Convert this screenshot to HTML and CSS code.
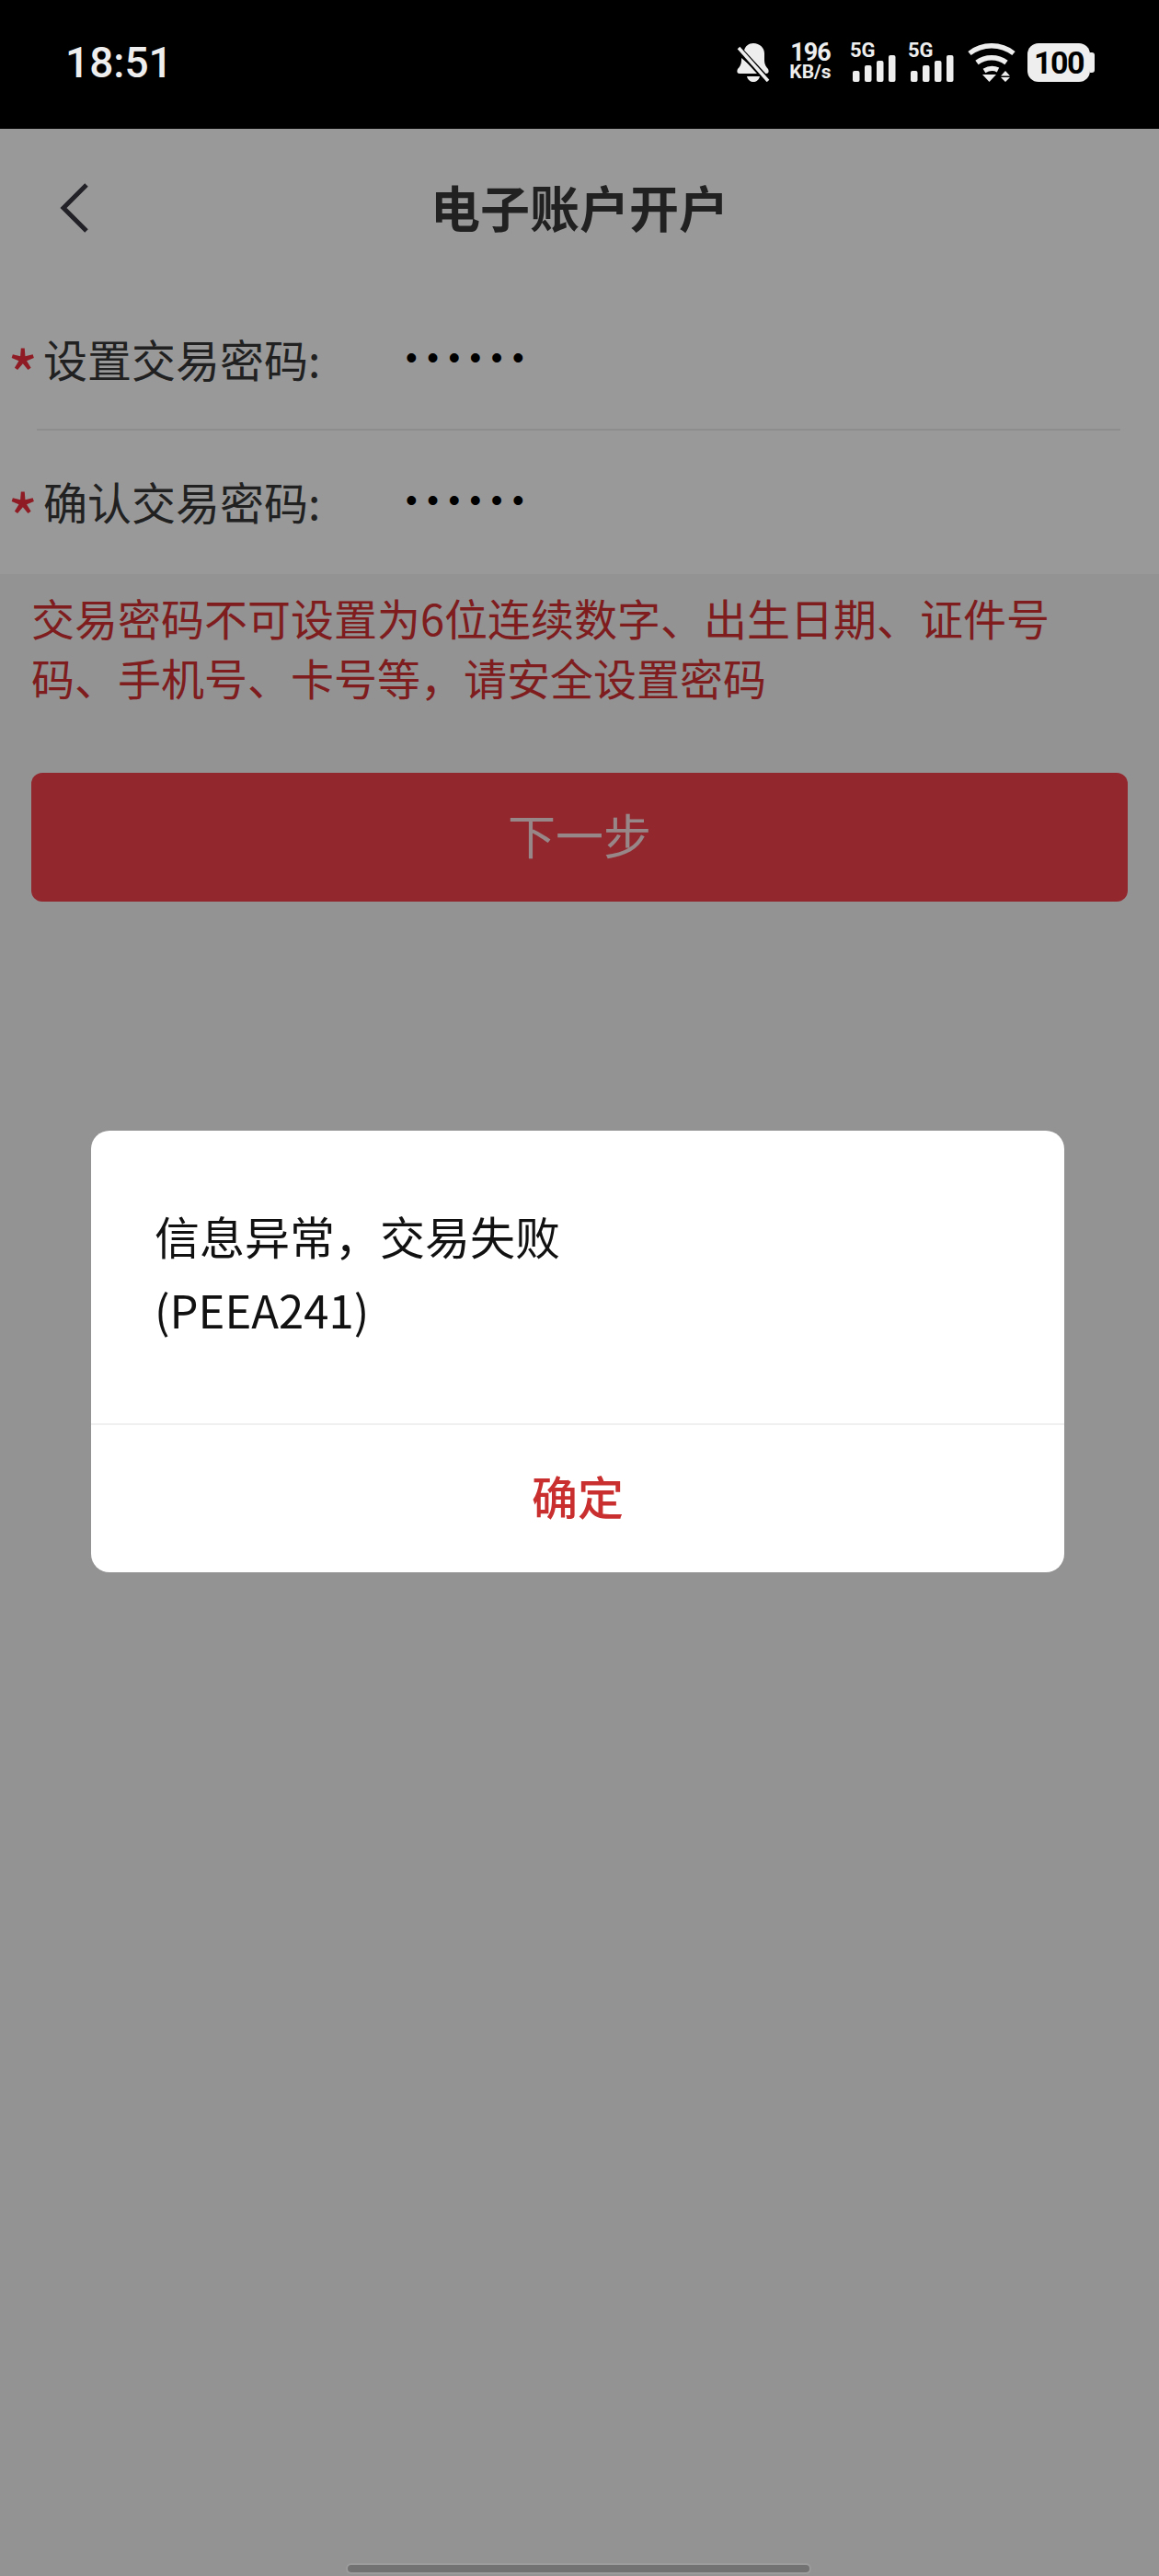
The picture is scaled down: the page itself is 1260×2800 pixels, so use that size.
FILE: index.html
```html
<!DOCTYPE html>
<html lang="zh-CN">
<head>
    <meta charset="UTF-8">
    <meta name="viewport" content="width=device-width, initial-scale=1.0">
    <title>电子账户开户</title>
    <link rel="stylesheet" href="styles.css">
</head>
<body>
    <div class="status-bar">
        <span class="status-time">18:51</span>
        <div class="status-icons">
            <svg class="icon-bell" width="36" height="42" viewBox="0 0 36 42">
                <path d="M18 0c-5 0-9 3-10 8l-1 3 21 22h4c3 0 3-3 2-5-2-2-4-5-4-9v-8c0-6-5-11-12-11z" fill="#eee"/>
                <path d="M5 16v3c0 4-2 7-4 9-1 2-1 5 2 5h22z" fill="#eee"/>
                <path d="M11 36h14c-1 4-4 6-7 6s-6-2-7-6z" fill="#eee"/>
                <path d="M1 5l33 36" stroke="#000" stroke-width="7"/>
                <path d="M2 5l32 36" stroke="#eee" stroke-width="3.6"/>
            </svg>
            <div class="net-speed">
                <span class="speed-num">196</span>
                <span class="speed-unit">KB/s</span>
            </div>
            <div class="signal">
                <span class="signal-type">5G</span>
                <svg width="47" height="29" viewBox="0 0 47 29" fill="#eee">
                    <rect x="0" y="17" width="7.5" height="12" rx="2"/>
                    <rect x="13" y="11" width="7.5" height="18" rx="2"/>
                    <rect x="26" y="6" width="7.5" height="23" rx="2"/>
                    <rect x="39" y="0" width="7.5" height="29" rx="2"/>
                </svg>
            </div>
            <div class="signal">
                <span class="signal-type">5G</span>
                <svg width="47" height="29" viewBox="0 0 47 29" fill="#eee">
                    <rect x="0" y="17" width="7.5" height="12" rx="2"/>
                    <rect x="13" y="11" width="7.5" height="18" rx="2"/>
                    <rect x="26" y="6" width="7.5" height="23" rx="2"/>
                    <rect x="39" y="0" width="7.5" height="29" rx="2"/>
                </svg>
            </div>
            <svg class="icon-wifi" width="52" height="42" viewBox="0 0 52 42">
                <g fill="none" stroke="#eee" stroke-width="5.4">
                    <path d="M2 11C16 0 36 0 50 11"/>
                    <path d="M10 21c9-7 23-7 32 0"/>
                    <path d="M18 30c5-3 11-3 15-1"/>
                </g>
                <path d="M16 34h15l-7.500 8z" fill="#eee"/>
                <path d="M41 30l5 5.500H36zM41 42l5-5H36z" fill="#eee"/>
            </svg>
            <div class="battery"><span>100</span></div>
        </div>
    </div>

    <header class="nav-bar">
        <svg class="back-icon" width="32" height="56" viewBox="0 0 32 56">
            <path d="M29 3L4 28l25 25" fill="none" stroke="#383842" stroke-width="5"/>
        </svg>
        <h1>电子账户开户</h1>
    </header>

    <form class="password-form">
        <div class="form-row">
            <span class="required">*</span>
            <label>设置交易密码:</label>
            <span class="dots">••••••</span>
        </div>
        <div class="form-row">
            <span class="required">*</span>
            <label>确认交易密码:</label>
            <span class="dots">••••••</span>
        </div>
    </form>

    <main class="content">
        <p class="notice">交易密码不可设置为6位连续数字、出生日期、证件号码、手机号、卡号等，请安全设置密码</p>
        <button type="button" class="next-button">下一步</button>
    </main>

    <!-- dim layer + alert -->
    <div class="overlay"></div>
    <div class="dialog-wrap">
        <div class="dialog">
            <div class="dialog-body">
                <p>信息异常，交易失败</p>
                <p>(PEEA241)</p>
            </div>
            <div class="dialog-action">确定</div>
        </div>
    </div>
    <div class="home-bar"></div>
</body>
</html>
```

FILE: styles.css
```css
/* General Styling */
* {
    box-sizing: border-box;
}

body {
    font-family: 'Noto Sans CJK SC', 'Noto Sans', sans-serif;
    margin: 0;
    padding: 0;
    height: 2800px;
    position: relative;
    overflow: hidden;
    background-color: #f5f5f5;
    color: #383838;
}

/* Status bar */
.status-bar {
    height: 140px;
    background-color: #000;
    padding: 47px 70px 0 71px;
    display: flex;
    justify-content: space-between;
    align-items: flex-start;
    position: relative;
    z-index: 2;
}

.status-time {
    font-family: 'Roboto', sans-serif;
    font-weight: 500;
    font-size: 46px;
    line-height: 42px;
    color: #eee;
}

.status-icons {
    display: flex;
    align-items: flex-start;
    height: 42px;
}

.icon-bell {
    margin-right: 19px;
}

.net-speed {
    width: 50px;
    margin-right: 21px;
    display: flex;
    flex-direction: column;
    align-items: center;
    font-family: 'Roboto', sans-serif;
    font-weight: 700;
    color: #eee;
}

.speed-num {
    font-size: 27px;
    line-height: 20px;
    letter-spacing: -1px;
}

.speed-unit {
    font-size: 21px;
    line-height: 22px;
}

.signal {
    width: 47px;
    margin-right: 16px;
    height: 42px;
    position: relative;
}

.signal svg {
    position: absolute;
    left: 0;
    bottom: 0;
}

.signal-type {
    position: absolute;
    left: -3px;
    top: -3px;
    font-family: 'Roboto', sans-serif;
    font-weight: 700;
    font-size: 22px;
    line-height: 22px;
    color: #eee;
}

.icon-wifi {
    margin-left: -1px;
    margin-right: 13px;
}

.battery {
    width: 68px;
    height: 42px;
    margin-right: 5px;
    background-color: #eee;
    border-radius: 12px;
    display: flex;
    align-items: center;
    justify-content: center;
    position: relative;
    font-family: 'Roboto', sans-serif;
    font-weight: 700;
    font-size: 34px;
    letter-spacing: -1.5px;
    color: #000;
}

.battery::after {
    content: "";
    position: absolute;
    right: -5px;
    top: 10px;
    width: 5px;
    height: 22px;
    border-radius: 0 3px 3px 0;
    background-color: #eee;
}

/* Nav bar */
.nav-bar {
    height: 172px;
    padding-bottom: 3px;
    background-color: #fff;
    position: relative;
    display: flex;
    align-items: center;
    justify-content: center;
}

.nav-bar h1 {
    margin: 0;
    font-size: 54px;
    font-weight: 700;
    line-height: 100px;
}

.back-icon {
    position: absolute;
    left: 65px;
    top: 58px;
}

/* Form */
.password-form {
    background-color: #fff;
    height: 312px;
}

.form-row {
    height: 156px;
    margin-left: 40px;
    margin-right: 42px;
    border-bottom: 2px solid #ebebeb;
    display: flex;
    align-items: center;
    position: relative;
}

.form-row:last-child {
    border-bottom: none;
    padding-bottom: 4px;
}

.required {
    position: absolute;
    left: -32px;
    top: 58px;
    font-size: 72px;
    line-height: 70px;
    color: #ee2f3c;
}

.form-row label {
    font-size: 48px;
    width: 394px;
    margin-left: 7px;
    line-height: 60px;
}

.dots {
    font-family: 'Liberation Sans', sans-serif;
    font-size: 36px;
    letter-spacing: 10.6px;
    color: #000;
}

/* Notice and button */
.content {
    padding: 14px 34px 0;
}

.notice {
    margin: 0;
    font-size: 47px;
    line-height: 65px;
    color: #d23033;
    width: 1130px;
}

.next-button {
    display: block;
    width: 1192px;
    height: 140px;
    margin-top: 72px;
    padding-bottom: 8px;
    background-color: #f5414e;
    color: rgba(255, 255, 255, 0.85);
    border: none;
    border-radius: 12px;
    font-family: inherit;
    font-size: 52px;
}

/* Dialog */
.overlay {
    position: absolute;
    top: 140px;
    left: 0;
    right: 0;
    bottom: 0;
    background-color: rgba(0, 0, 0, 0.4);
}

.dialog-wrap {
    position: absolute;
    top: 140px;
    left: 0;
    right: 0;
    bottom: 0;
    padding: 0 4px 2px 0;
    display: flex;
    align-items: center;
    justify-content: center;
}

.dialog {
    width: 1058px;
    height: 480px;
    background-color: #fff;
    border-radius: 20px;
}

.dialog-body {
    height: 320px;
    padding: 74px 69px 0;
    border-bottom: 2px solid #f0f0f0;
    color: #111;
    font-size: 49px;
    line-height: 80px;
}

.dialog-body p {
    margin: 0;
}

.dialog-action {
    height: 160px;
    padding-bottom: 8px;
    display: flex;
    align-items: center;
    justify-content: center;
    font-size: 50px;
    font-weight: 500;
    color: #c92f2f;
}

.home-bar {
    position: absolute;
    left: 378px;
    bottom: 4px;
    width: 502px;
    height: 8px;
    border-radius: 4px;
    background-color: #727272;
    box-shadow: 0 0 0 2px #9c9c9c;
}
```
